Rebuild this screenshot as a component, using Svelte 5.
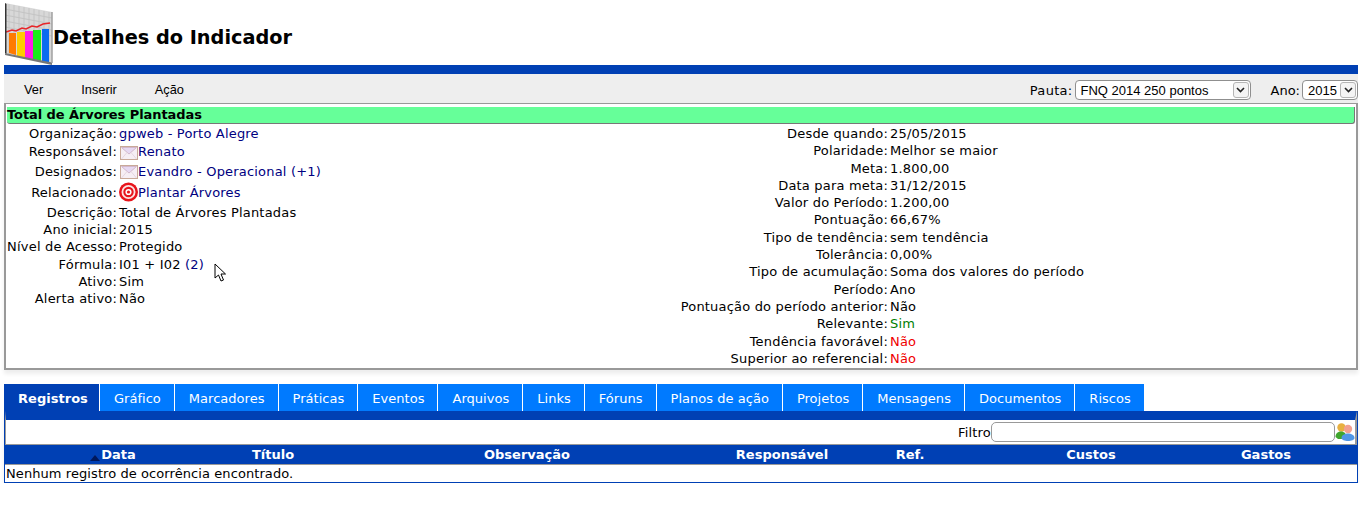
<script>
    const tabs = ["Registros", "Gráfico", "Marcadores", "Práticas", "Eventos", "Arquivos", "Links", "Fóruns", "Planos de ação", "Projetos", "Mensagens", "Documentos", "Riscos"];
    const details = [
        ["Desde quando", "25/05/2015"],
        ["Polaridade", "Melhor se maior"],
        ["Meta", "1.800,00"],
        ["Data para meta", "31/12/2015"],
        ["Valor do Período", "1.200,00"],
        ["Pontuação", "66,67%"],
        ["Tipo de tendência", "sem tendência"],
        ["Tolerância", "0,00%"],
        ["Tipo de acumulação", "Soma dos valores do período"],
        ["Período", "Ano"],
        ["Pontuação do período anterior", "Não"],
        ["Relevante", "Sim", "good"],
        ["Tendência favorável", "Não", "bad"],
        ["Superior ao referencial", "Não", "bad"]
    ];
    const cols = ["Data", "Título", "Observação", "Responsável", "Ref.", "Custos", "Gastos"];
</script>

{#snippet mail()}
    <svg class="mail" width="18" height="14" viewBox="0 0 18 14">
        <rect x="0.5" y="0.5" width="17" height="13" fill="#f6eef4" stroke="#c9a998" />
        <path d="M1.5 1.5 L9 8 L16.5 1.5 Z" fill="#e6d8f2" stroke="#d3b8cc" />
        <path d="M1.5 13 L7 6.5 M16.5 13 L11 6.5" stroke="#e6d6e0" fill="none" />
    </svg>
{/snippet}

{#snippet arrow()}
    <span class="arrow">
        <svg width="9" height="6" viewBox="0 0 9 6"><path d="M1 1 L4.5 4.5 L8 1" fill="none" stroke="#222" stroke-width="1.6" /></svg>
    </span>
{/snippet}

<div class="page">
    <header class="title">
        <svg class="logo" width="50" height="62" viewBox="0 0 50 62">
            <path d="M1 0 L48 9 L48 60 L1 50 Z" fill="#d8d8d8" />
            <path d="M5 1V51M10 2V52M15 3V53M20 4V54M25 5V55M30 6V56M35 7V57M40 8V58M45 9V59M1 6L48 15M1 12L48 21M1 18L48 27M1 24L48 33" stroke="#c4c4c4" stroke-width="1" />
            <path d="M5 30 H12 V52 L5 50 Z" fill="#ff7a00" />
            <path d="M13 29 H21 V55 L13 53 Z" fill="#ffcc00" />
            <path d="M21 28 H29 V56 L21 55 Z" fill="#ff1ee6" />
            <path d="M29 27 H37 V58 L29 56 Z" fill="#19ee19" />
            <path d="M38 26 H45 V60 L38 58 Z" fill="#0a6bef" />
            <path d="M2 29 L8 27 L12 28 L18 25 L22 26 L28 23 L33 24 L39 21 L46 20" fill="none" stroke="#e8262a" stroke-width="1.6" />
            <path d="M1 0 V50 L2.5 51 V1 Z" fill="#333" />
            <path d="M1 50 L48 59.5 L48 62 L1 52 Z" fill="#777" />
            <path d="M48 9 V60" stroke="#a0a0a0" stroke-width="1.5" />
        </svg>
        <h1>Detalhes do Indicador</h1>
    </header>

    <div class="bluebar"></div>

    <nav class="menu">
        <div class="menu-items">
            <span>Ver</span>
            <span>Inserir</span>
            <span>Ação</span>
        </div>
        <div class="filters">
            <label for="pauta">Pauta:</label>
            <div class="select pauta">
                <select id="pauta"><option>FNQ 2014 250 pontos</option></select>
                {@render arrow()}
            </div>
            <label for="ano" class="ano-label">Ano:</label>
            <div class="select ano">
                <select id="ano"><option>2015</option></select>
                {@render arrow()}
            </div>
        </div>
    </nav>

    <section class="card">
        <div class="card-title">Total de Árvores Plantadas</div>
        <div class="columns">
            <div class="left">
                <div class="k">Organização:</div><div class="v link">gpweb - Porto Alegre</div>
                <div class="k">Responsável:</div><div class="v link icon-row">{@render mail()}Renato</div>
                <div class="k">Designados:</div><div class="v link icon-row">{@render mail()}Evandro - Operacional (+1)</div>
                <div class="k">Relacionado:</div>
                <div class="v link icon-row">
                    <svg class="target" width="19" height="20" viewBox="0 0 19 20">
                        <circle cx="9.5" cy="10" r="9.5" fill="#e8141c" />
                        <circle cx="9.5" cy="10" r="7" fill="#fbe4e4" />
                        <circle cx="9.5" cy="10" r="5.2" fill="#e8141c" />
                        <circle cx="9.5" cy="10" r="3.1" fill="#fff" />
                        <circle cx="9.5" cy="10" r="1.6" fill="#e8141c" />
                    </svg>Plantar Árvores
                </div>
                <div class="k low">Descrição:</div><div class="v low">Total de Árvores Plantadas</div>
                <div class="k">Ano inicial:</div><div class="v">2015</div>
                <div class="k">Nível de Acesso:</div><div class="v">Protegido</div>
                <div class="k">Fórmula:</div><div class="v">I01 + I02 <span class="link">(2)</span></div>
                <div class="k">Ativo:</div><div class="v">Sim</div>
                <div class="k">Alerta ativo:</div><div class="v">Não</div>
            </div>
            <div class="right">
                {#each details as [k, v, tone]}
                    <div class="k">{k}:</div><div class="v {tone ?? ''}">{v}</div>
                {/each}
            </div>
        </div>
    </section>

    <div class="tabs">
        {#each tabs as tab, i}
            <div class="tab" class:active={i === 0}>{tab}</div>
        {/each}
    </div>

    <section class="panel">
        <div class="filter">
            <span>Filtro</span>
            <input type="text" />
            <svg width="20" height="20" viewBox="0 0 20 20">
                <circle cx="6.5" cy="5.5" r="4.2" fill="#e8b040" />
                <path d="M0.5 15 C0.5 8 11 8 11 14 L9 17 H3 Z" fill="#3fa52d" />
                <circle cx="13" cy="7" r="4.2" fill="#f2a090" />
                <path d="M6.5 16 C6.5 10 19.5 10 19.5 16 C19.5 20 6.5 20 6.5 16 Z" fill="#4f96e6" />
            </svg>
        </div>
        <div class="head">
            {#each cols as c, i}
                <div class="th">{#if i === 0}<span class="sort"></span>{/if}{c}</div>
            {/each}
        </div>
        <div class="empty">Nenhum registro de ocorrência encontrado.</div>
    </section>

    <svg class="cursor" width="14" height="20" viewBox="0 0 14 20">
        <path d="M1 1 V15 L4.5 12 L7 18 L9.5 17 L7 11 H11.5 Z" fill="#fff" stroke="#000" stroke-width="1" />
    </svg>
</div>

<style>
    :global(body) {
        margin: 0;
        background: #fff;
    }
    .page {
        position: relative;
        padding: 0 2px 0 4px;
        font-family: "DejaVu Sans", Verdana, sans-serif;
        font-size: 13px;
        color: #000;
    }
    .title {
        display: flex;
        align-items: flex-end;
        height: 65px;
    }
    .logo {
        flex: none;
    }
    h1 {
        margin: 0 0 15px -1px;
        font-size: 19.3px;
        font-weight: bold;
        line-height: 24px;
    }
    .bluebar {
        height: 9px;
        background: #0040b4;
    }
    .menu {
        display: flex;
        justify-content: space-between;
        align-items: center;
        height: 29px;
        background: #eeeeee;
        font-family: "Liberation Sans", Arial, sans-serif;
    }
    .menu-items {
        display: flex;
        gap: 38px;
        padding: 2px 0 0 20px;
        font-size: 12.8px;
    }
    .filters {
        display: flex;
        align-items: center;
        padding-top: 3px;
        font-family: "DejaVu Sans", sans-serif;
        letter-spacing: 0.3px;
    }
    label {
        margin-right: 2px;
    }
    .select {
        position: relative;
        box-sizing: border-box;
        height: 20px;
        border: 1px solid #8f8f8f;
        border-radius: 4px;
        background: #fff;
    }
    .select select {
        appearance: none;
        display: block;
        width: 100%;
        height: 18px;
        padding: 0 0 0 5px;
        border: 0;
        background: transparent;
        color: #000;
        font-family: "Liberation Sans", Arial, sans-serif;
        font-size: 13px;
    }
    .arrow {
        position: absolute;
        top: 1px;
        right: 1px;
        display: flex;
        align-items: center;
        justify-content: center;
        box-sizing: border-box;
        width: 16px;
        height: 16px;
        border: 1px solid #b5b5b5;
        border-radius: 3px;
        background: #f4f4f4;
    }
    .pauta {
        width: 176px;
    }
    .ano-label {
        margin-left: 20px;
        letter-spacing: 0;
    }
    .ano {
        width: 56px;
    }
    .card {
        height: 262px;
        border: 2px solid #999;
        border-top-width: 1px;
        box-shadow: 0 4px 4px #eee;
        padding-top: 2px;
    }
    .card-title {
        margin: 1px 1px 0;
        height: 16px;
        background: #66ff99;
        border-bottom: 1px solid #777;
        border-right: 1px solid #777;
        border-radius: 0 0 3px 3px;
        font-weight: bold;
        letter-spacing: -0.08px;
        line-height: 16px;
    }
    .columns {
        display: flex;
        margin-top: 1px;
        letter-spacing: 0.19px;
    }
    .left, .right {
        display: grid;
        align-content: start;
        column-gap: 2px;
        line-height: 17.3px;
    }
    .left {
        grid-template-columns: 111px 1fr;
        grid-template-rows: 17.3px 18.7px 21px 21px 18px repeat(5, 17.3px);
        width: 672px;
    }
    .right {
        grid-template-columns: 210px 1fr;
        grid-auto-rows: 17.3px;
    }
    .k {
        text-align: right;
        white-space: nowrap;
        align-self: center;
    }
    .v {
        white-space: nowrap;
        align-self: center;
    }
    .low {
        align-self: end;
    }
    .icon-row {
        display: flex;
        align-items: center;
    }
    .mail {
        flex: none;
        margin: 2px 0 0 1px;
    }
    .target {
        flex: none;
    }
    .link {
        color: #000080;
    }
    .good {
        color: #008000;
    }
    .bad {
        color: #f00000;
    }
    .tabs {
        display: flex;
        margin-top: 14px;
        letter-spacing: 0.03px;
    }
    .tab {
        height: 27px;
        padding: 0 13px 0 14px;
        border-right: 1px solid #fff;
        background: #007aff;
        color: #fff;
        line-height: 29px;
    }
    .tab:last-child {
        border-right: 0;
    }
    .tab.active {
        padding-right: 11px;
        background: #0040b4;
        font-weight: bold;
    }
    .panel {
        border: 1px solid #0040b4;
        border-top-width: 0;
        box-shadow: 0 4px 4px #eee;
    }
    .filter {
        display: flex;
        justify-content: flex-end;
        align-items: center;
        height: 24px;
        border: 1px solid #999;
        border-right-width: 2px;
        border-top: 9px solid #0040b4;
        letter-spacing: 0.2px;
    }
    .filter input {
        box-sizing: border-box;
        width: 344px;
        height: 20px;
        padding: 0;
        border: 1px solid #999;
        border-radius: 5px;
    }
    .filter svg {
        flex: none;
    }
    .head {
        display: grid;
        grid-template-columns: 216px 104px 404px 106px 150px 212px 138px;
        height: 19px;
        background: #0040b4;
        color: #fff;
        font-weight: bold;
        line-height: 20px;
        border-bottom: 1px solid #999;
    }
    .th {
        text-align: center;
        white-space: nowrap;
    }
    .sort {
        display: inline-block;
        width: 0;
        margin-right: 1px;
        border: 5px solid transparent;
        border-top: 0;
        border-bottom: 6px solid #00185c;
        vertical-align: -2px;
    }
    .empty {
        height: 17px;
        line-height: 17px;
        padding-left: 1px;
        letter-spacing: 0.08px;
    }
    .cursor {
        position: absolute;
        left: 214px;
        top: 263px;
    }
</style>
